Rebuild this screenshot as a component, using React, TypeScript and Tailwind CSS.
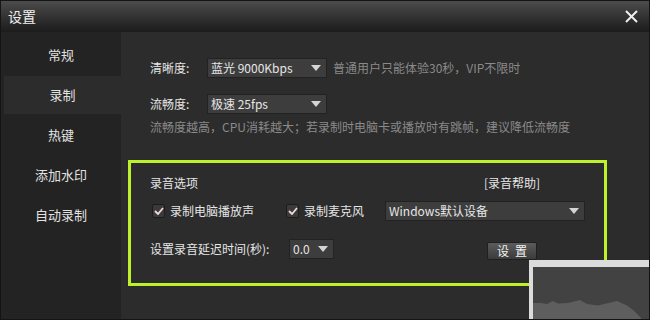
import React from "react";

const FONT = { fontFamily: '"Noto Sans CJK SC", "Noto Sans", sans-serif' };

function Arrow() {
  return (
    <svg width="10" height="6" viewBox="0 0 10 6" className="shrink-0">
      <polygon points="0,0 10,0 5,6" fill="#d4d4d4" />
    </svg>
  );
}

function Select({ text, width }: { text: string; width: string }) {
  return (
    <div
      className={`${width} h-[20px] bg-[#3d3d3d] border border-[#222] flex items-center justify-between pl-[3px] pr-[5px] text-[12px] text-[#e6e6e6] leading-none`}
    >
      <span className="whitespace-nowrap">{text}</span>
      <Arrow />
    </div>
  );
}

function Check({ label }: { label: string }) {
  return (
    <div className="flex items-center gap-[5px]">
      <div className="w-[13px] h-[14px] rounded-[2px] bg-[#3a3a3a] border border-[#1c1c1c] flex items-center justify-center">
        <svg width="10" height="8" viewBox="0 0 10 8">
          <polyline points="1,4 4,7 9,1" fill="none" stroke="#f2dada" strokeWidth="1.8" />
        </svg>
      </div>
      <span className="text-[12px] text-[#e6e6e6] whitespace-nowrap">{label}</span>
    </div>
  );
}

const NAV = ["常规", "录制", "热键", "添加水印", "自动录制"];

export default function App() {
  return (
    <div
      className="relative w-[650px] h-[320px] overflow-hidden border border-[#141414] bg-[#2c2c2c] flex flex-col"
      style={FONT}
    >
      {/* title bar */}
      <div className="h-[31px] shrink-0 flex items-center justify-between pl-[7px] pr-[11px] bg-gradient-to-b from-[#4c4c4c] to-[#1c1c1c]">
        <span className="text-[14px] text-[#f0f0f0]">设置</span>
        <svg width="13" height="13" viewBox="0 0 13 13">
          <line x1="1" y1="1" x2="12" y2="12" stroke="#f0f0f0" strokeWidth="2" />
          <line x1="12" y1="1" x2="1" y2="12" stroke="#f0f0f0" strokeWidth="2" />
        </svg>
      </div>

      <div className="flex flex-1">
        {/* sidebar */}
        <div className="w-[120px] bg-[#232323] pt-1 flex flex-col gap-[2px]">
          {NAV.map((n, i) => (
            <div
              key={n}
              className={`h-[38px] flex items-center justify-center text-[13px] text-[#e2e2e2] ${
                i === 1 ? "ml-[3px] bg-[#2c2c2c]" : ""
              }`}
            >
              {n}
            </div>
          ))}
        </div>

        {/* content */}
        <div className="flex-1 flex flex-col">
          <div className="flex items-center mt-[26px] ml-[29px]">
            <span className="w-[57px] text-[12px] text-[#e6e6e6]">清晰度:</span>
            <Select text="蓝光 9000Kbps" width="w-[120px]" />
            <span className="ml-[6px] text-[12px] text-[#8a8a8a] whitespace-nowrap">
              普通用户只能体验30秒，VIP不限时
            </span>
          </div>
          <div className="flex items-center mt-[16px] ml-[29px]">
            <span className="w-[57px] text-[12px] text-[#e6e6e6]">流畅度:</span>
            <Select text="极速 25fps" width="w-[120px]" />
          </div>
          <div className="mt-[6px] ml-[29px] h-[14px] leading-[14px] text-[12px] text-[#8a8a8a] whitespace-nowrap">
            流畅度越高，CPU消耗越大；若录制时电脑卡或播放时有跳帧，建议降低流畅度
          </div>

          {/* audio box */}
          <div className="mt-[26px] ml-[7px] w-[479px] h-[126px] border-[3px] border-[#bdf22a] pl-[19px] flex flex-col">
            <div className="flex items-center mt-[13px] h-[14px] text-[12px] text-[#e6e6e6]">
              <span className="flex-1">录音选项</span>
              <span className="mr-[64px]">[录音帮助]</span>
            </div>
            <div className="flex items-center mt-[11px] h-[20px]">
              <div className="w-[136px] pl-[2px]">
                <Check label="录制电脑播放声" />
              </div>
              <div className="w-[99px]">
                <Check label="录制麦克风" />
              </div>
              <Select text="Windows默认设备" width="w-[200px]" />
            </div>
            <div className="flex items-start mt-[18px]">
              <span className="w-[139px] h-[20px] flex items-center text-[12px] text-[#e6e6e6] whitespace-nowrap">
                设置录音延迟时间(秒):
              </span>
              <Select text="0.0" width="w-[45px]" />
              <div className="ml-[153px] mt-[3px] w-[50px] h-[18px] rounded-[2px] border border-[#202020] bg-gradient-to-b from-[#5c5c5c] to-[#3b3b3b] flex items-center justify-center gap-[6px] text-[12px] text-[#f2f2f2] leading-none">
                <span>设</span>
                <span>置</span>
              </div>
            </div>
          </div>
        </div>
      </div>

      {/* preview thumbnail */}
      <div className="absolute right-[-1px] bottom-[-1px] w-[121px] h-[60px] border-l-4 border-t-[7px] border-[#dcdcdc] bg-[#424242]">
        <svg width="117" height="53" viewBox="0 0 117 53" className="block">
          <polygon
            points="0,36 8,36 14,37 20,34 25,36.5 35,36 47,33 54,37 65,38.5 71,37 84,34 94,38.5 100,43 107,49.7 109,53 0,53"
            fill="#5e5e5e"
          />
        </svg>
      </div>
    </div>
  );
}
